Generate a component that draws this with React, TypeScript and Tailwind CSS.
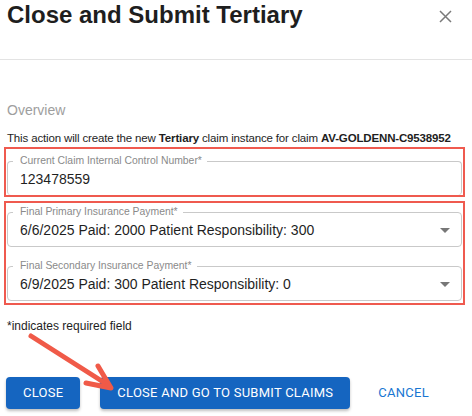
import React from 'react';

// Fields shown in the dialog
const PAYMENT_FIELDS = [
  {
    label: 'Final Primary Insurance Payment*',
    value: '6/6/2025 Paid: 2000 Patient Responsibility: 300',
  },
  {
    label: 'Final Secondary Insurance Payment*',
    value: '6/9/2025 Paid: 300 Patient Responsibility: 0',
  },
];

const Field = ({
  label,
  value,
  select = false,
  className = '',
}: {
  label: string;
  value: string;
  select?: boolean;
  className?: string;
}) => (
  <fieldset className={`m-0 p-0 border border-[#c9c9c9] rounded-[4px] min-w-0 ${className}`}>
    <legend className="ml-[5px] pl-[7px] pr-[5px] text-[10.4px] leading-[12px] text-[#8a8a8a]">
      {label}
    </legend>
    <div className="mt-[2px] pl-[12px] pr-[11px] flex items-center justify-between">
      <span className="text-[14px] leading-[20px] text-[#1f1f1f]">{value}</span>
      {select && (
        <svg width="10" height="5" viewBox="0 0 10 5">
          <path d="M0 0 L10 0 L5 5 Z" fill="#777777" />
        </svg>
      )}
    </div>
  </fieldset>
);

export default function App() {
  return (
    <div className="relative w-[472px] h-[416px] bg-white overflow-hidden font-['Liberation_Sans',Arial,sans-serif]">
      {/* header */}
      <div className="h-[60px] border-b border-[#e3e3e3] flex justify-between pl-[7px] pr-[20px]">
        <h1 className="text-[24px] leading-[29px] font-bold text-[#1e1e1e]">
          Close and Submit Tertiary
        </h1>
        <svg className="mt-[10px]" width="13" height="13" viewBox="0 0 13 13">
          <path d="M1 1 L12 12 M12 1 L1 12" stroke="#7a7a7a" strokeWidth="1.5" />
        </svg>
      </div>

      <div className="px-[4px]">
        <div className="mt-[40px] pl-[3px] text-[14px] leading-[20px] text-[#9e9e9e]">Overview</div>
        <p className="mt-[10px] pl-[3px] text-[11.5px] tracking-[-0.15px] leading-[16px] text-[#1e1e1e] whitespace-nowrap">
          This action will create the new <b>Tertiary</b> claim instance for claim{' '}
          <b>AV-GOLDENN-C9538952</b>
        </p>

        <div className="mt-[1px] w-[461px] h-[50px] border-2 border-[#ef5a4f] pl-[1px] pr-[1px] pt-[6px] overflow-hidden">
          <Field
            label="Current Claim Internal Control Number*"
            value="123478559"
            className="border-b-0 pb-[6px]"
          />
        </div>

        <div className="mt-[4px] w-[461px] border-2 border-[#ef5a4f] pl-[1px] pr-[1px] pt-[3px] pb-[2px] flex flex-col gap-[13px]">
          {PAYMENT_FIELDS.map((field) => (
            <Field key={field.label} label={field.label} value={field.value} select className="pb-[6px]" />
          ))}
        </div>

        <p className="mt-[13px] pl-[3px] text-[12px] leading-[16px] text-[#1e1e1e]">
          *indicates required field
        </p>
      </div>

      {/* actions */}
      <div className="mt-[43px] pl-[6px] flex items-center gap-[20px] font-['Roboto',sans-serif] text-[13px] tracking-[0.25px]">
        <button className="h-[32px] px-[17px] rounded-[4px] bg-[#1565c0] text-white uppercase shadow-[0_2px_3px_rgba(0,0,0,0.25)]">
          Close
        </button>
        <button className="h-[32px] px-[17px] rounded-[4px] bg-[#1565c0] text-white uppercase shadow-[0_2px_3px_rgba(0,0,0,0.25)]">
          Close and go to submit claims
        </button>
        <button className="ml-[8px] h-[32px] text-[#1976d2] uppercase">Cancel</button>
      </div>

      {/* annotation arrow */}
      <svg className="absolute left-0 top-0 pointer-events-none" width="472" height="416">
        <g stroke="#f05a48" strokeWidth="5" strokeLinecap="round" strokeLinejoin="round" fill="none">
          <path d="M31 336 L108 385" />
          <path d="M86 383 L111 388 L98 366" />
        </g>
      </svg>
    </div>
  );
}
